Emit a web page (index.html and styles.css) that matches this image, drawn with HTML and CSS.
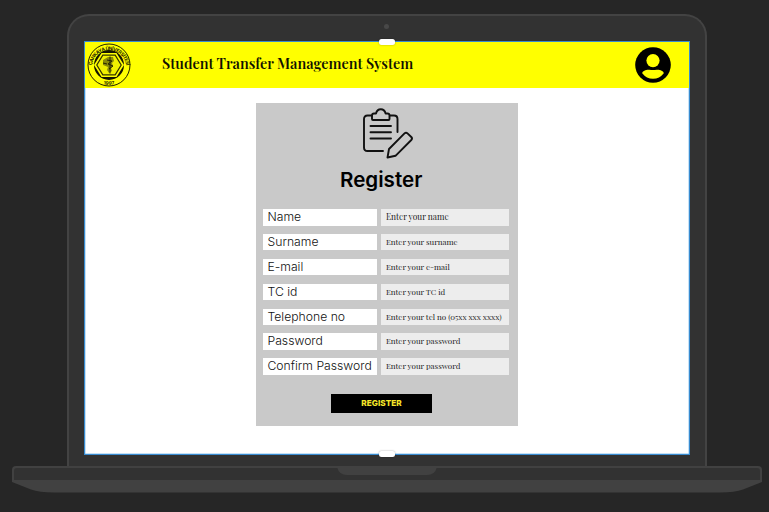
FILE: index.html
```html
<!DOCTYPE html>
<html lang="en">
<head>
<meta charset="utf-8">
<title>Student Transfer Management System</title>
<link rel="stylesheet" href="styles.css">
</head>
<body>
<div class="laptop">
  <div class="lid">
    <i class="camera"></i>
    <main class="screen">
      <i class="handle handle-top"></i>
      <i class="handle handle-bottom"></i>
      <header class="topbar">
        <svg class="logo" viewBox="0 0 44 44">
          <defs>
            <path id="arc-top" d="M4.900 22.500a17.200 17.200 0 0 1 34.200 0"/>
            <path id="arc-bottom" d="M10 39.800q12 4 24 0"/>
          </defs>
          <circle cx="22" cy="22" r="21" fill="none" stroke="#222200" stroke-width="1"/>
          <circle cx="22" cy="22" r="15" fill="#151500"/>
          <path d="M14.500 10h15L37 22l-7.500 12h-15L7 22z" fill="#ffff00"/>
          <path d="M15.800 12.200h12.400l6 9.800-6 9.800H15.800l-6-9.800z" fill="#f0f000" stroke="#303000" stroke-width="1.200"/>
          <path d="M16 17l5-3h5l1 4-2 2 1 3-2 2 1 3-3 2-2-3 1-3-5-2z" fill="#8a8a08"/>
          <path d="M23 13.500v17M20 17l5 1-4 3 5 2-4 3M16 20l4 1" fill="none" stroke="#252500" stroke-width="1"/>
          <text class="logo-text"><textPath href="#arc-top" startOffset="50%" text-anchor="middle" textLength="50">ÇANKAYA ÜNİVERSİTESİ</textPath></text>
          <text class="logo-text"><textPath href="#arc-bottom" startOffset="50%" text-anchor="middle">1997</textPath></text>
        </svg>
        <h1 class="title">Student Transfer Management System</h1>
        <svg class="avatar" viewBox="0 0 36 36">
          <circle cx="18" cy="18" r="17.800" fill="#000"/>
          <circle cx="18" cy="13.600" r="6.600" fill="#ffff00"/>
          <path d="M7.200 26.300C7.200 23.500 12 22.300 14.300 22.700Q18 23.500 21.700 22.700C24 22.300 28.800 23.500 28.800 26.300Q24.500 31.800 18 31.800T7.200 26.300z" fill="#ffff00"/>
        </svg>
      </header>
      <form class="card">
        <svg class="clipboard" viewBox="0 0 52 52">
          <g fill="none" stroke="#111" stroke-width="1.900" stroke-linecap="round" stroke-linejoin="round">
            <path d="M9.500 7.500H5.500Q2 7.500 2 11V39.500Q2 43 5.500 43H21M28 7.500H32Q35.500 7.500 35.500 11V24"/>
            <path d="M10 11V7.500Q10 5.500 12 5.500H14Q15 1.200 18.800 1.200T23.600 5.500H25.500Q27.500 5.500 27.500 7.500V11Q27.500 12 26.500 12H11Q10 12 10 11z"/>
            <path d="M8.500 18H29M8.500 24.300H29M8.500 30.500H29"/>
            <path d="M25.500 49.500L27 41L42.500 25.400Q44 24 45.500 25.400L49.300 29Q50.700 30.500 49.300 32L33.500 47.800z"/>
          </g>
        </svg>
        <h2 class="heading">Register</h2>
        <div class="fields">
          <label class="label">Name</label><div class="hint hint-first">Enter your name</div>
          <label class="label">Surname</label><div class="hint">Enter your surname</div>
          <label class="label">E-mail</label><div class="hint">Enter your e-mail</div>
          <label class="label">TC id</label><div class="hint">Enter your TC id</div>
          <label class="label">Telephone no</label><div class="hint">Enter your tel no (05xx xxx xxxx)</div>
          <label class="label">Password</label><div class="hint">Enter your password</div>
          <label class="label">Confirm Password</label><div class="hint">Enter your password</div>
        </div>
        <button class="submit" type="button">REGISTER</button>
      </form>
    </main>
  </div>
  <svg class="base" viewBox="0 0 750 27">
    <path d="M0 4Q0 0 4 0H746Q750 0 750 4V16L731 23.500Q723 26.500 708 26.500H42Q27 26.500 19 23.500L0 16z" fill="#414141"/>
    <path d="M2 5Q2 2 5 2H745Q748 2 748 5V14H2z" fill="#323232"/>
    <path d="M325 1H425Q423 9 415 9H335Q327 9 325 1z" fill="#414141"/>
  </svg>
</div>
</body>
</html>
```
FILE: styles.css
```css
* { box-sizing: border-box; }

body {
  margin: 0;
  height: 512px;
  overflow: hidden;
  background: #262626;
  font-family: Inter, sans-serif;
}

.laptop {
  display: flex;
  flex-direction: column;
  width: 750px;
  margin-left: 12px;
  padding-top: 14px;
}

.lid {
  position: relative;
  width: 640px;
  height: 452px;
  margin-left: 55px;
  padding: 25px 15px 0;
  border: 2px solid #434343;
  border-bottom: 0;
  border-radius: 22px 22px 0 0;
  background: #323232;
}

.camera {
  position: absolute;
  top: 8px;
  left: 315px;
  width: 5px;
  height: 5px;
  border-radius: 50%;
  background: #484848;
}

.screen {
  position: relative;
  width: 606px;
  height: 414px;
  border: 1px solid #388bd0;
  background: #fff;
  box-shadow: inset 0 0 0 .5px #8cc4ee;
}

.handle {
  position: absolute;
  left: 294px;
  width: 16px;
  height: 6px;
  border-radius: 2.5px;
  background: #fff;
  box-shadow: 0 0 2px rgba(0, 0, 0, .35);
}

.handle-top { top: -3px; }
.handle-bottom { bottom: -3px; }

.topbar {
  display: flex;
  height: 46px;
  padding: 0 18px 0 2px;
  background: #ffff00;
}

.logo {
  width: 44px;
  height: 44px;
  margin: 1px 0 0;
}

.logo-text {
  font: bold 4.8px Inter, sans-serif;
  fill: #222200;
}

.title {
  width: 260px;
  margin: 10.5px 0 0 31px;
  font: 600 14.45px/20px "Playfair Display", "Liberation Serif", serif;
  white-space: nowrap;
  color: #111100;
}

.avatar {
  width: 36px;
  height: 36px;
  margin: 5px 0 0 auto;
}

.card {
  display: flex;
  flex-direction: column;
  width: 262px;
  height: 323px;
  margin: 15px 0 0 171px;
  padding: 5px 9px 0 7px;
  background: #c9c9c9;
}

.clipboard {
  width: 52px;
  height: 52px;
  margin-left: 99px;
}

.heading {
  margin: 7px 0 0 77px;
  font-size: 20.6px;
  line-height: 26px;
  font-weight: 600;
  color: #000;
}

.fields {
  display: grid;
  grid-template-columns: 114.4px 127.6px;
  grid-auto-rows: 16.5px;
  gap: 8.4px 4px;
  margin-top: 16px;
}

.label {
  padding-left: 4.5px;
  background: #fff;
  font-size: 12.2px;
  line-height: 16.5px;
  font-weight: 300;
  white-space: nowrap;
  color: #111;
}

.hint {
  padding-left: 4.5px;
  background: #ededed;
  font: 400 8px/16.5px "Playfair Display", "Liberation Serif", serif;
  white-space: nowrap;
  color: #222;
}

.hint-first { font-size: 8.4px; }

.submit {
  width: 101px;
  height: 19px;
  margin: 19px 0 0 68px;
  padding: 0;
  border: 0;
  background: #000;
  color: #f5e62a;
  font: 800 8.2px/19px Inter, sans-serif;
}

.base {
  width: 750px;
  height: 27px;
}
```
